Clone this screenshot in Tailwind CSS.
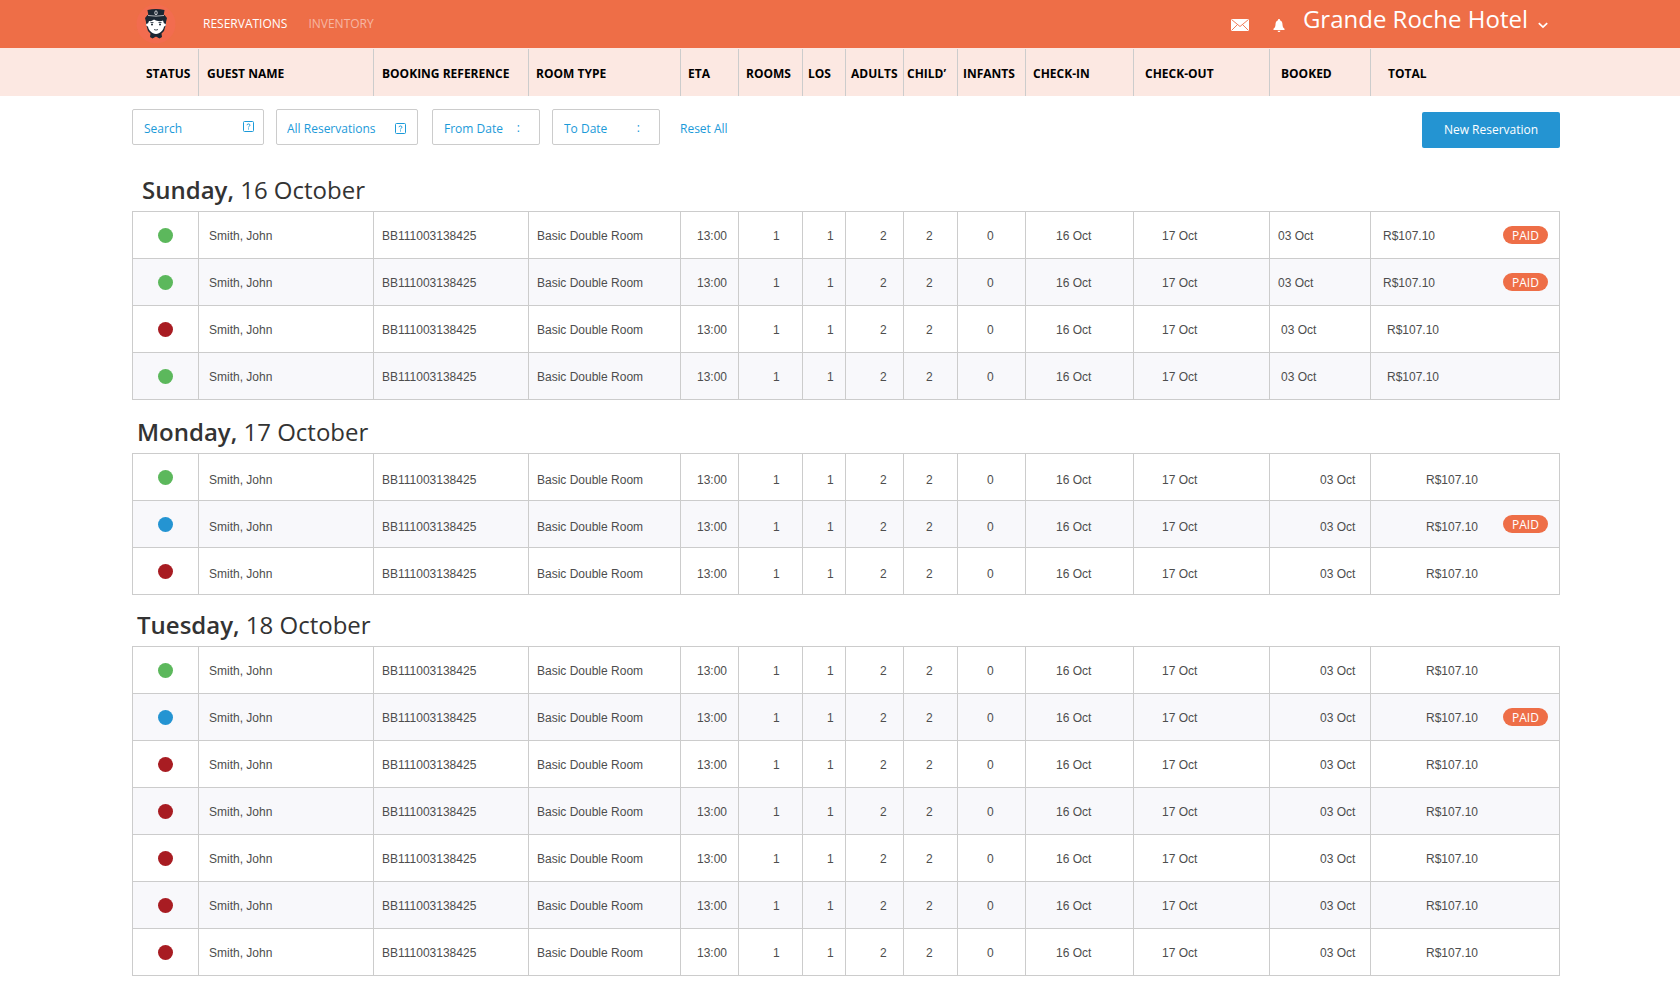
<!DOCTYPE html>
<html lang="en">
<head>
    <meta charset="UTF-8">
    <meta name="viewport" content="width=device-width, initial-scale=1.0">
    <title>Reservations - Grande Roche Hotel</title>
    <script src="https://cdn.jsdelivr.net/npm/@tailwindcss/browser@4"></script>
</head>
<body class="bg-white font-['Open_Sans',sans-serif] text-xs text-[#333]">
    <header class="flex h-12 min-w-[1280px] items-center bg-[#ee6e47] pl-[136px] pr-[132px] text-white">
        <a href="#" aria-label="Home">
            <svg class="block" width="40" height="40" viewBox="0 0 40 40">
                <circle cx="20" cy="20" r="19.5" fill="#f26c4f"/>
                <!-- hair and beard -->
                <path fill="#1b2733" d="M9 14 L11.500 11 H28.500 L31 14 L30 18 L30 20 L28 27 L25.500 29.500 L26 33 L23.500 34.500 L20 32 L16.500 34.500 L14 33 L14.500 29.500 L12 27 L10 20 L10 18 Z"/>
                <!-- face -->
                <path fill="#fff" d="M13 17 C15 17.500 17 16.500 18 15.500 C21 17.500 25 17.500 27 16.500 L28 19.500 C30.500 19 30.500 22 28 22.500 C27.500 26.500 24 29.500 20 30 C16 29.500 12.500 26.500 12 22.500 C9.500 22 9.500 19 12 19.500 Z"/>
                <path stroke="#1b2733" stroke-width="0.800" fill="none" d="M14.500 18.500 h3 M22.500 18.500 h3 M18 25.500 q2 1.200 4 0"/>
                <circle cx="16" cy="20.500" r="1" fill="#1b2733"/>
                <circle cx="24" cy="20.500" r="1" fill="#1b2733"/>
                <path fill="#1b2733" d="M16.500 30 L20 31.200 L23.500 30 L23 34 L20 32.500 L17 34 Z"/>
                <!-- cap -->
                <path fill="#1b2733" d="M11.500 6 Q20 4 28.500 6 L27.500 12.500 H12.500 Z"/>
                <path stroke="#d9d9d9" stroke-width="0.800" fill="none" d="M12 11.500 Q20 12.800 28 11.500"/>
                <ellipse cx="20" cy="8.800" rx="1.200" ry="2" fill="none" stroke="#fff" stroke-width="0.800"/>
            </svg>
        </a>
        <nav class="ml-[27px] flex gap-[21px]">
            <a href="#" class="text-white">RESERVATIONS</a>
            <a href="#" class="text-white/50">INVENTORY</a>
        </nav>
        <div class="ml-auto flex items-center">
            <button type="button" aria-label="Messages" class="mt-0.5 mr-6">
                <svg class="block" width="18" height="12" viewBox="0 0 18 12">
                    <rect width="18" height="12" rx="0.500" fill="#fff"/>
                    <path d="M0.500 0.500 L9 7.500 L17.500 0.500 M0.500 11.500 L6.500 5.500 M17.500 11.500 L11.500 5.500" fill="none" stroke="#ee6e47" stroke-width="0.900"/>
                </svg>
            </button>
            <button type="button" aria-label="Notifications" class="mt-0.5 mr-[18px]">
                <svg class="block" width="12" height="13" viewBox="0 0 12 13">
                    <path fill="#fff" d="M6 0 C6.800 0 7 0.600 7 1.200 C8.800 1.800 9.400 3.500 9.500 5.500 C9.600 7.800 10.300 8.800 11.500 9.800 V11 H0.500 V9.800 C1.700 8.800 2.400 7.800 2.500 5.500 C2.600 3.500 3.200 1.800 5 1.200 C5 0.600 5.200 0 6 0 Z M4.500 11.700 H7.500 C7.300 12.600 6.700 13 6 13 C5.300 13 4.700 12.600 4.500 11.700 Z"/>
                </svg>
            </button>
            <button type="button" class="flex items-center gap-2.5 pb-2.5">
                <span class="text-2xl">Grande Roche Hotel</span>
                <svg class="mt-3 block" width="10" height="7" viewBox="0 0 10 7">
                    <path d="M0.800 1.200 L5 5.200 L9.200 1.200" fill="none" stroke="#fff" stroke-width="1.700"/>
                </svg>
            </button>
        </div>
    </header>

    <div class="min-w-[1280px] bg-[#fce8e2] pt-px pl-[132px] pr-[120px]">
        <table class="w-full table-fixed border-separate border-spacing-0 border-l border-transparent">
            <colgroup class="cols"></colgroup>
            <thead>
                <tr id="headRow" class="h-[47px] text-left text-black"></tr>
            </thead>
        </table>
    </div>

    <main class="min-w-[1280px] pl-[132px] pr-[120px] pb-6">
        <form class="flex items-start pt-[13px] text-[#1b9ad9]">
            <div class="relative mr-3">
                <input type="text" aria-label="Search" placeholder="Search" class="h-9 w-[132px] rounded-xs border border-[#ccc] pt-0.5 pl-[11px] pr-8 placeholder:text-[#1b9ad9]">
                <svg class="absolute top-3 right-2.5" width="11" height="11" viewBox="0 0 11 11">
                    <rect x="0.500" y="0.500" width="10" height="10" rx="1" fill="none" stroke="#1b9ad9"/>
                    <path d="M4 4.200 C4 2.500 7 2.500 7 4.200 C7 5.200 5.500 5.100 5.500 6.400 M5.500 7.400 V8.500" fill="none" stroke="#1b9ad9"/>
                </svg>
            </div>
            <div class="relative mr-[14px]">
                <select aria-label="Reservation filter" class="h-9 w-[142px] appearance-none rounded-xs border border-[#ccc] pt-[3px] pl-2.5 pr-8">
                    <option>All Reservations</option>
                </select>
                <svg class="absolute top-[14px] right-3" width="11" height="11" viewBox="0 0 11 11">
                    <rect x="0.500" y="0.500" width="10" height="10" rx="1" fill="none" stroke="#1b9ad9"/>
                    <path d="M4 4.200 C4 2.500 7 2.500 7 4.200 C7 5.200 5.500 5.100 5.500 6.400 M5.500 7.400 V8.500" fill="none" stroke="#1b9ad9"/>
                </svg>
            </div>
            <div class="relative mr-3">
                <input type="text" aria-label="From Date" placeholder="From Date" class="h-9 w-[108px] rounded-xs border border-[#ccc] pt-0.5 pl-[11px] pr-7 placeholder:text-[#1b9ad9]">
                <span class="absolute top-[11px] right-5">:</span>
            </div>
            <div class="relative mr-5">
                <input type="text" aria-label="To Date" placeholder="To Date" class="h-9 w-[108px] rounded-xs border border-[#ccc] pt-0.5 pl-[11px] pr-7 placeholder:text-[#1b9ad9]">
                <span class="absolute top-[11px] right-5">:</span>
            </div>
            <button type="reset" class="h-9 pt-[3px]">Reset All</button>
            <button type="button" class="mt-[3px] ml-auto h-9 w-[138px] rounded-xs bg-[#2494d2] text-white">New Reservation</button>
        </form>

        <section class="mt-[26px]">
            <h2 class="mb-[5px] pl-2.5 text-2xl"><span class="font-semibold">Sunday,</span> 16 October</h2>
            <table class="w-full table-fixed border-separate border-spacing-0 border-t border-l border-[#ccc]">
                <colgroup class="cols"></colgroup>
                <tbody id="sunday"></tbody>
            </table>
        </section>

        <section class="mt-4">
            <h2 class="mb-[5px] pl-[5px] text-2xl"><span class="font-semibold">Monday,</span> 17 October</h2>
            <table class="w-full table-fixed border-separate border-spacing-0 border-t border-l border-[#ccc]">
                <colgroup class="cols"></colgroup>
                <tbody id="monday"></tbody>
            </table>
        </section>

        <section class="mt-[14px]">
            <h2 class="mb-[5px] pl-[5px] text-2xl"><span class="font-semibold">Tuesday,</span> 18 October</h2>
            <table class="w-full table-fixed border-separate border-spacing-0 border-t border-l border-[#ccc]">
                <colgroup class="cols"></colgroup>
                <tbody id="tuesday"></tbody>
            </table>
        </section>
    </main>

    <script>
        // Column titles, widths and text insets
        const columns = [
            { title: 'STATUS', width: 66, head: 'pl-[13px]' },
            { title: 'GUEST NAME', width: 175, head: 'pl-2', cell: 'pl-2.5', value: 'Smith, John' },
            { title: 'BOOKING REFERENCE', width: 155, head: 'pl-2', cell: 'pl-2', value: 'BB111003138425' },
            { title: 'ROOM TYPE', width: 152, head: 'pl-[7px]', cell: 'pl-2', value: 'Basic Double Room' },
            { title: 'ETA', width: 58, head: 'pl-[7px]', cell: 'pl-4', value: '13:00' },
            { title: 'ROOMS', width: 64, head: 'pl-[7px]', cell: 'pl-[34px]', value: '1' },
            { title: 'LOS', width: 43, head: 'pl-[5px]', cell: 'pl-6', value: '1' },
            { title: 'ADULTS', width: 58, head: 'pl-[5px]', cell: 'pl-[34px]', value: '2' },
            { title: 'CHILD’', width: 54, head: 'pl-[3px]', cell: 'pl-[22px]', value: '2' },
            { title: 'INFANTS', width: 68, head: 'pl-[5px]', cell: 'pl-[29px]', value: '0' },
            { title: 'CHECK-IN', width: 108, head: 'pl-[7px]', cell: 'pl-[30px]', value: '16 Oct' },
            { title: 'CHECK-OUT', width: 136, head: 'pl-[11px]', cell: 'pl-7', value: '17 Oct' },
            { title: 'BOOKED', width: 101, head: 'pl-[11px]' },
            { title: 'TOTAL', width: 189, head: 'pl-[17px]' },
        ];

        const statusColors = {
            green: 'bg-[#5cb85c]',
            red: 'bg-[#a81c22]',
            blue: 'bg-[#2494d2]',
        };

        const insets = {
            tight: ['pl-2', 'pl-3'],
            normal: ['pl-[11px]', 'pl-4'],
            wide: ['pl-[50px]', 'pl-[55px]'],
        };

        const days = {
            sunday: {
                text: 'pt-px',
                rows: [
                    { status: 'green', paid: true, inset: 'tight' },
                    { status: 'green', paid: true, inset: 'tight' },
                    { status: 'red', inset: 'normal' },
                    { status: 'green', inset: 'normal' },
                ],
            },
            monday: {
                text: 'pt-1.5',
                rows: [
                    { status: 'green', inset: 'wide' },
                    { status: 'blue', paid: true, inset: 'wide' },
                    { status: 'red', inset: 'wide' },
                ],
            },
            tuesday: {
                text: 'pt-px',
                rows: [
                    { status: 'green', inset: 'wide' },
                    { status: 'blue', paid: true, inset: 'wide' },
                    { status: 'red', inset: 'wide' },
                    { status: 'red', inset: 'wide' },
                    { status: 'red', inset: 'wide' },
                    { status: 'red', inset: 'wide' },
                    { status: 'red', inset: 'wide' },
                ],
            },
        };

        document.querySelectorAll('.cols').forEach((group) => {
            group.innerHTML = columns.map((c) => `<col style="width:${c.width}px">`).join('');
        });

        document.getElementById('headRow').innerHTML = columns.map((c, i) => {
            const line = i < columns.length - 1 ? 'border-r border-[#ccc]' : '';
            return `<th scope="col" class="pt-0.5 font-bold whitespace-nowrap ${line} ${c.head}">${c.title}</th>`;
        }).join('');

        function renderRow(row, index, text) {
            const base = 'border-r border-b border-[#ccc] whitespace-nowrap';
            const [booked, total] = insets[row.inset];
            const badge = row.paid
                ? `<span class="mr-[11px] h-[18px] w-[45px] rounded-full bg-[#ee6e47] pt-px text-center font-['Open_Sans',sans-serif] leading-[18px] text-white">PAID</span>`
                : '';
            const cells = columns.filter((c) => c.value).map((c) => `<td class="${base} ${text} ${c.cell}">${c.value}</td>`).join('');

            return `
                <tr class="h-[47px] ${index % 2 ? 'bg-[#f8f8fb]' : 'bg-white'}">
                    <td class="${base}"><span class="mx-auto block size-[15px] rounded-full ${statusColors[row.status]}" role="img" aria-label="${row.status}"></span></td>
                    ${cells}
                    <td class="${base} ${text} ${booked}">03 Oct</td>
                    <td class="${base} ${total}">
                        <div class="flex items-center justify-between"><span class="${text}">R$107.10</span>${badge}</div>
                    </td>
                </tr>`;
        }

        Object.entries(days).forEach(([id, day]) => {
            const body = document.getElementById(id);
            body.className = "font-['Liberation_Sans',Arial,sans-serif] text-[#4d4d4d]";
            body.innerHTML = day.rows.map((row, i) => renderRow(row, i, day.text)).join('');
        });
    </script>
</body>
</html>
